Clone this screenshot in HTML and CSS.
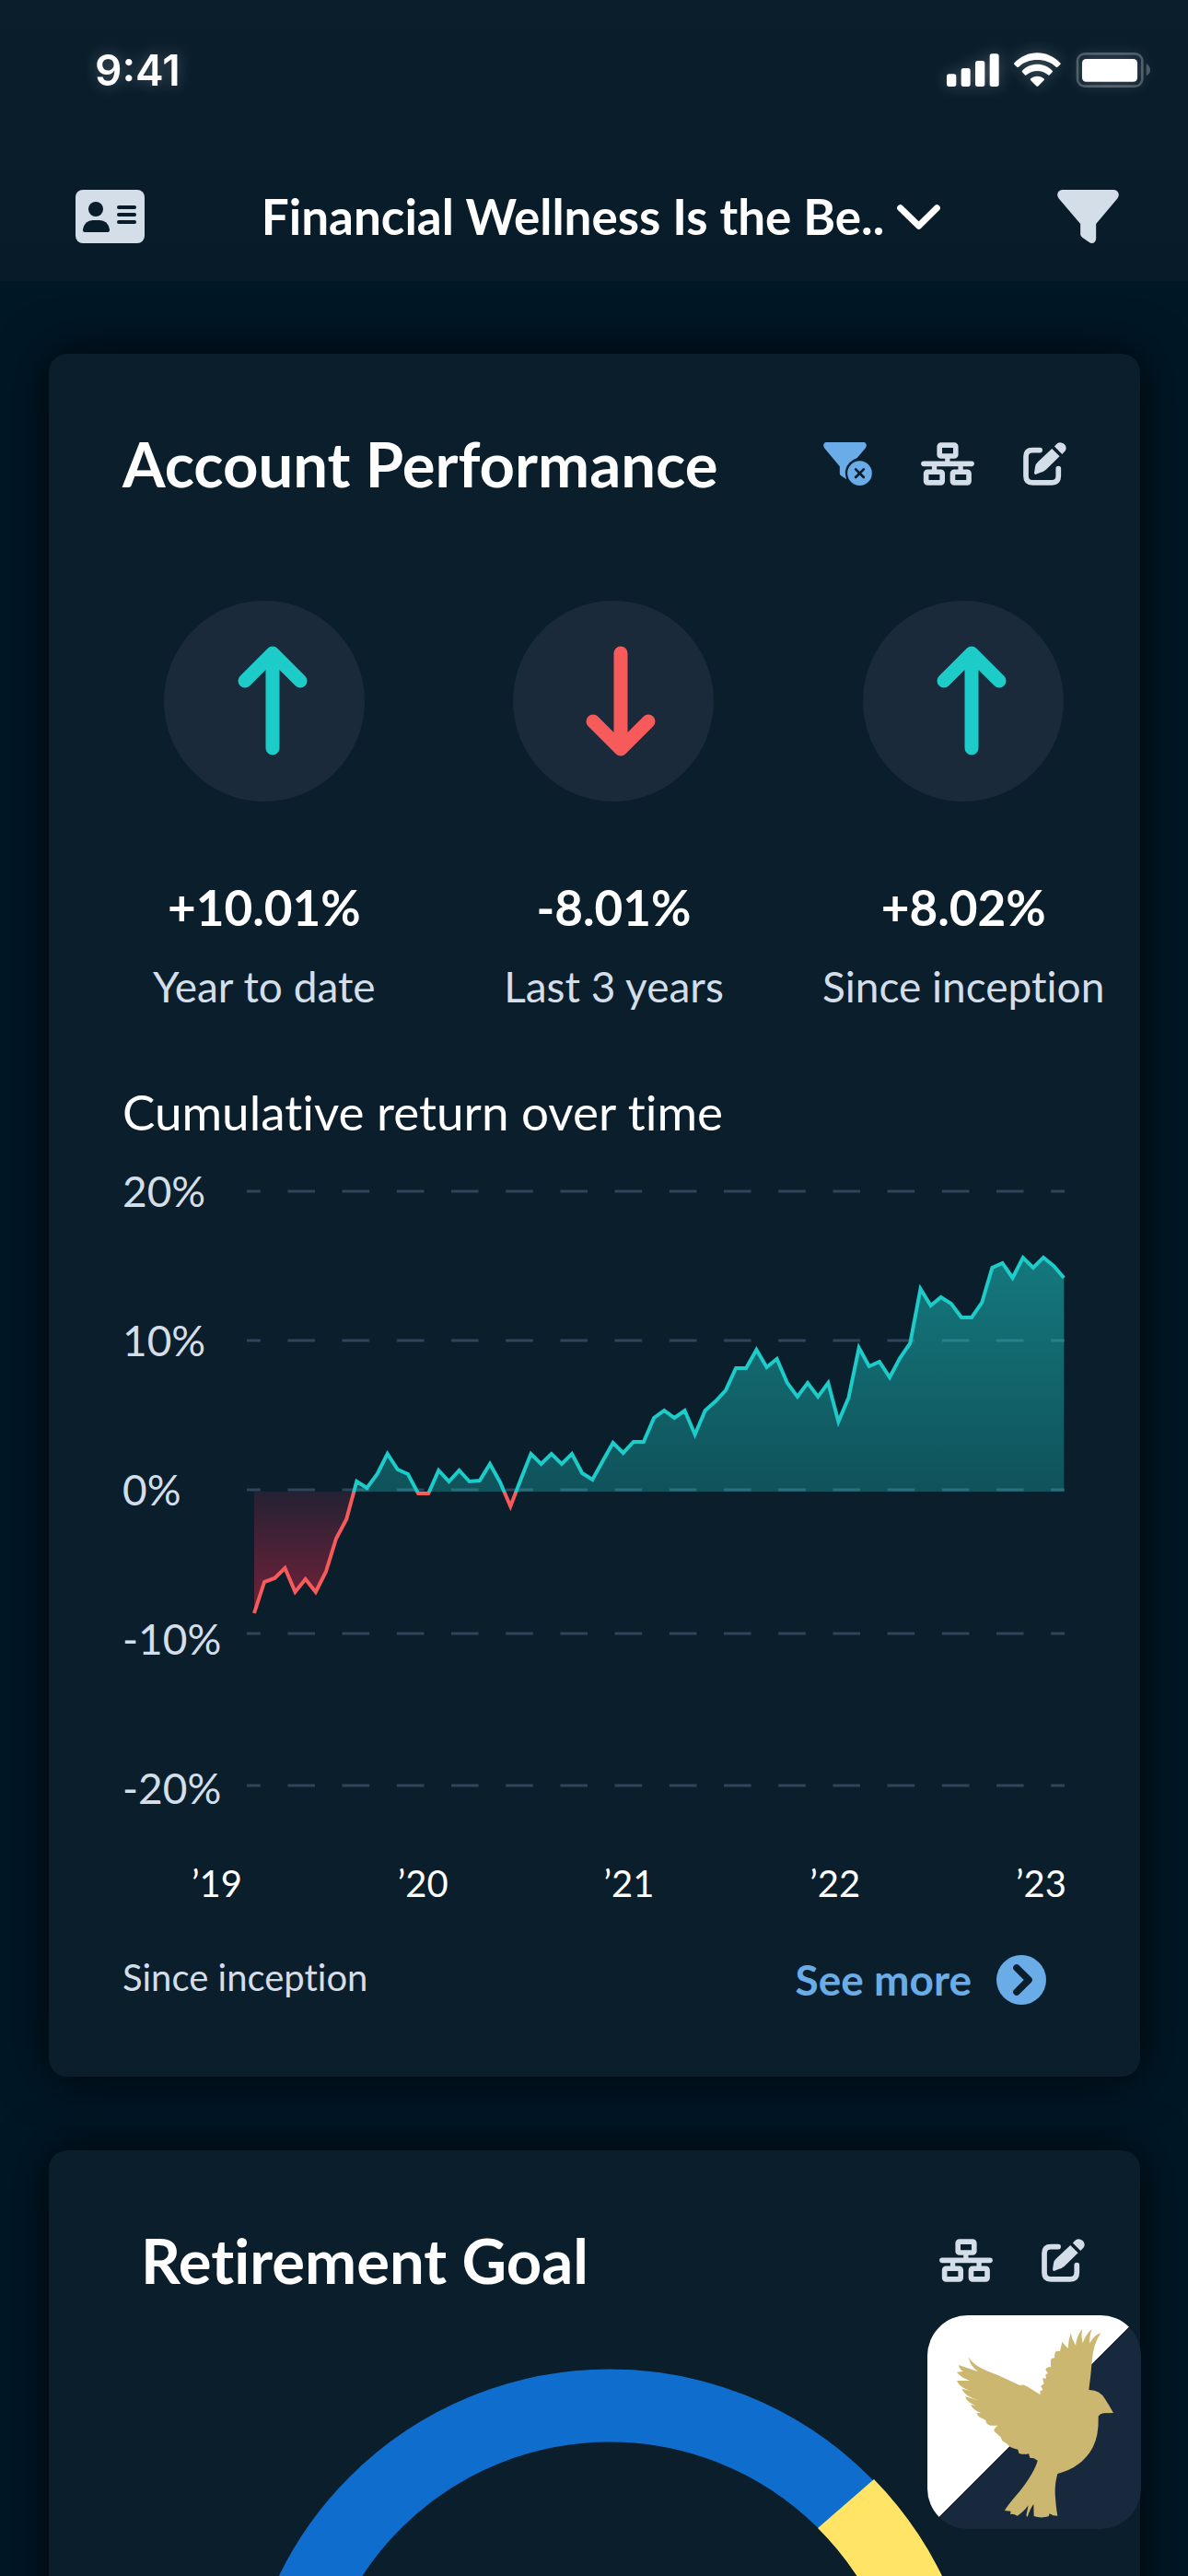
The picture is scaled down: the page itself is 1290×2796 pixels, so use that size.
FILE: index.html
```html
<!DOCTYPE html>
<html lang="en">
<head>
<meta charset="utf-8">
<meta name="viewport" content="width=device-width, initial-scale=1">
<title>Account Performance</title>
<link rel="stylesheet" href="styles.css">
</head>
<body>
<svg class="sprite" aria-hidden="true">
  <symbol id="icon-network" viewBox="482 117 175 141">
    <g fill="none" stroke="currentColor" stroke-width="17">
      <rect x="543" y="126" width="53" height="36" rx="5"/>
      <rect x="499" y="214" width="53" height="35" rx="5"/>
      <rect x="586" y="214" width="53" height="35" rx="5"/>
      <path d="M491 187H648" stroke-linecap="round"/>
      <path d="M569 165V187M526 187V210M612 187V210" stroke-width="16"/>
    </g>
  </symbol>
  <symbol id="icon-edit" viewBox="814 119 140 139">
    <path d="M868 144H844Q823 144 823 165V228Q823 249 844 249H907Q928 249 928 228V204" fill="none" stroke="currentColor" stroke-width="17" stroke-linecap="round"/>
    <path d="M907 139L932 164L888 207Q880 214 869 217L856 222Q849 224 850 216L853 197Q855 188 862 182ZM915 132Q925 119 934 119Q952 121 953 138Q953 146 940 157Z" fill="currentColor"/>
  </symbol>
</svg>

<div class="app">
  <header class="topbar">
    <div class="status">
      <span class="time">9:41</span>
      <svg class="status-icons" viewBox="205 51 663 114" fill="#fff" aria-hidden="true">
        <rect x="205" y="121" width="31" height="41" rx="8"/>
        <rect x="252" y="102" width="30" height="60" rx="8"/>
        <rect x="298" y="78" width="31" height="84" rx="8"/>
        <rect x="345" y="55" width="30" height="107" rx="8"/>
        <path d="M424 86C466 40 534 40 576 86Q577 88 575 90L565 99Q563 100 561 98C530 67 470 67 439 98Q437 100 435 99L425 90Z"/>
        <path d="M450 111C478 82 522 82 550 111Q551 113 549 115L539 125Q537 126 535 124C515 107 485 107 465 124Q463 126 461 125L451 115Z"/>
        <path d="M477 137C490 125 510 125 523 137Q524 139 522 141L502 161Q500 162 498 161L478 141Z"/>
        <rect x="631" y="55" width="211" height="106" rx="24" fill="none" stroke="#fff" stroke-opacity=".25" stroke-width="8"/>
        <path d="M855 88Q868 95 868 108Q868 120 855 127Z" fill-opacity=".25"/>
        <rect x="646" y="72" width="180" height="74" rx="13"/>
      </svg>
    </div>
    <nav class="nav">
      <button class="icon-button" type="button" aria-label="Contact card">
        <svg class="icon-card" viewBox="0 0 75 58" aria-hidden="true">
          <rect width="75" height="58" rx="8" fill="#d4dee9"/>
          <g fill="#091c2a">
            <circle cx="22" cy="21" r="8"/>
            <path d="M8 43V44Q8 46 10 46H35Q37 46 37 44V43Q35 33 26 33H19Q10 33 8 43Z"/>
            <rect x="45" y="17" width="21" height="4" rx="2"/>
            <rect x="45" y="25" width="21" height="4" rx="2"/>
            <rect x="45" y="33" width="21" height="4" rx="2"/>
          </g>
        </svg>
      </button>
      <button class="switcher" type="button">
        <span>Financial Wellness Is the Be..</span>
        <svg class="icon-chevron" viewBox="39 555 141 81" fill="none" stroke="#fff" stroke-width="21" stroke-linecap="round" stroke-linejoin="round" aria-hidden="true"><path d="M50 566L110 625L169 566"/></svg>
      </button>
      <button class="icon-button" type="button" aria-label="Filter">
        <svg class="icon-filter" viewBox="564 498 200 174" aria-hidden="true"><path d="M580 498H748Q762 499 764 514Q764 520 760 526L690 609V658Q688 672 676 672Q672 672 668 669L645 653Q639 649 639 643V609L568 526Q564 520 564 514Q566 499 580 498Z" fill="#d4dee9"/></svg>
      </button>
    </nav>
  </header>

  <main class="content">
    <section class="card">
      <div class="card-head">
        <h2>Account Performance</h2>
        <div class="actions">
          <button class="icon-button active" type="button" aria-label="Clear filter">
            <svg class="icon-clear" viewBox="163 117 158 141" aria-hidden="true">
              <path d="M172 117H294Q302 118 303 127Q303 132 299 137L272 169Q240 180 234 212Q234 227 238 238L220 226Q216 223 216 218V196L167 137Q163 132 163 127Q164 118 172 117Z" fill="currentColor"/>
              <circle cx="281" cy="218" r="40" fill="currentColor"/>
              <path d="M268 205L294 231M294 205L268 231" stroke="#0a1e2c" stroke-width="8" stroke-linecap="round"/>
            </svg>
          </button>
          <button class="icon-button" type="button" aria-label="Accounts structure"><svg class="icon-network"><use href="#icon-network"/></svg></button>
          <button class="icon-button" type="button" aria-label="Edit"><svg class="icon-edit"><use href="#icon-edit"/></svg></button>
        </div>
      </div>

      <div class="metrics">
        <div class="metric up">
          <svg class="arrow" viewBox="0 0 218 218" aria-hidden="true"><circle cx="109" cy="109" r="109"/><path d="M118 160V58M88 87L118 57L148 87"/></svg>
          <strong>+10.01%</strong>
          <span>Year to date</span>
        </div>
        <div class="metric down">
          <svg class="arrow" viewBox="0 0 218 218" aria-hidden="true"><circle cx="109" cy="109" r="109"/><path d="M117 57V159M87 131L117 161L147 131"/></svg>
          <strong>-8.01%</strong>
          <span>Last 3 years</span>
        </div>
        <div class="metric up">
          <svg class="arrow" viewBox="0 0 218 218" aria-hidden="true"><circle cx="109" cy="109" r="109"/><path d="M118 160V58M88 87L118 57L148 87"/></svg>
          <strong>+8.02%</strong>
          <span>Since inception</span>
        </div>
      </div>

      <h3>Cumulative return over time</h3>
      <div class="chart">
        <div class="y-axis"><span>20%</span><span>10%</span><span>0%</span><span>-10%</span><span>-20%</span></div>
        <svg class="plot" viewBox="0 -2 888 702" preserveAspectRatio="none" role="img" aria-label="Cumulative return, 2019 to 2023">
          <defs>
            <linearGradient id="gain" x1="0" y1="96" x2="0" y2="351" gradientUnits="userSpaceOnUse"><stop offset="0" stop-color="#1dccc8" stop-opacity=".52"/><stop offset="1" stop-color="#1dccc8" stop-opacity=".3"/></linearGradient>
            <linearGradient id="loss" x1="0" y1="351" x2="0" y2="483" gradientUnits="userSpaceOnUse"><stop offset="0" stop-color="#252134"/><stop offset="1" stop-color="#742239"/></linearGradient>
            <clipPath id="above"><rect width="892" height="352"/></clipPath>
            <clipPath id="below"><rect y="352" width="888" height="350"/></clipPath>
            <clipPath id="gain-area"><rect width="888" height="351"/></clipPath>
            <path id="line" d="M8 483 19.1 449 30.3 445 41.4 434 52.5 460 63.7 446 74.8 460 85.9 438 97 402 108.2 381 119.3 340 130.4 347 141.6 332 152.7 310 163.8 327 175 332 186.1 353 197.2 353 208.3 328 219.5 340 230.6 328 241.7 340 252.9 339 264 321 275.1 341 286.3 367 297.4 338 308.5 310 319.6 321 330.8 310 341.9 321 353 310 364.2 331 375.3 338 386.4 318 397.6 298 408.7 309 419.8 297 430.9 297 442.1 271 453.2 263 464.3 271 475.5 263 486.6 289 497.7 263 508.9 253 520 241 531.1 217 542.2 217 553.4 197 564.5 216 575.6 207 586.8 233 597.9 248 609 233 620.2 248 631.3 233 642.4 275 653.5 249 664.7 195 675.8 215 686.9 210 698.1 227 709.2 206 720.3 190 731.5 131 742.6 149 753.7 140 764.8 147 776 162 787.1 162 798.2 146 809.4 108 820.5 103 831.6 119 842.8 97 853.9 108 865 97 876.1 106 887.3 119"/>
          </defs>
          <g class="grid"><path d="M0 25H888"/><path d="M0 187H888"/><path d="M0 349H888"/><path d="M0 505H888"/><path d="M0 670H888"/></g>
          <path fill="url(#gain)" clip-path="url(#gain-area)" d="M119.3 351V340L130.4 347 141.6 332 152.7 310 163.8 327 175 332 186.1 353 197.2 353 208.3 328 219.5 340 230.6 328 241.7 340 252.9 339 264 321 275.1 341 286.3 367 297.4 338 308.5 310 319.6 321 330.8 310 341.9 321 353 310 364.2 331 375.3 338 386.4 318 397.6 298 408.7 309 419.8 297 430.9 297 442.1 271 453.2 263 464.3 271 475.5 263 486.6 289 497.7 263 508.9 253 520 241 531.1 217 542.2 217 553.4 197 564.5 216 575.6 207 586.8 233 597.9 248 609 233 620.2 248 631.3 233 642.4 275 653.5 249 664.7 195 675.8 215 686.9 210 698.1 227 709.2 206 720.3 190 731.5 131 742.6 149 753.7 140 764.8 147 776 162 787.1 162 798.2 146 809.4 108 820.5 103 831.6 119 842.8 97 853.9 108 865 97 876.1 106 887.3 119V351Z"/>
          <path fill="url(#loss)" d="M8 351V483L19.1 449 30.3 445 41.4 434 52.5 460 63.7 446 74.8 460 85.9 438 97 402 108.2 381 116.5 351Z"/>
          <use href="#line" class="gain-line" clip-path="url(#above)"/>
          <use href="#line" class="loss-line" clip-path="url(#below)"/>
        </svg>
      </div>
      <div class="x-axis"><span>’19</span><span>’20</span><span>’21</span><span>’22</span><span>’23</span></div>
      <div class="card-foot">
        <span>Since inception</span>
        <a href="#performance">See more
          <svg class="icon-more" viewBox="727 65 160 160" aria-hidden="true"><circle cx="807" cy="145" r="80" fill="currentColor"/><path d="M792 106L831 145L792 184" fill="none" stroke="#0a1e2c" stroke-width="22" stroke-linecap="round" stroke-linejoin="round"/></svg>
        </a>
      </div>
    </section>

    <section class="card goal">
      <div class="card-head">
        <h2>Retirement Goal</h2>
        <div class="actions">
          <button class="icon-button" type="button" aria-label="Accounts structure"><svg class="icon-network"><use href="#icon-network"/></svg></button>
          <button class="icon-button" type="button" aria-label="Edit"><svg class="icon-edit"><use href="#icon-edit"/></svg></button>
        </div>
      </div>
      <svg class="donut" viewBox="0 0 800 800" role="img" aria-label="Retirement goal progress">
        <circle cx="400" cy="400" r="360" fill="none" stroke="#0f6ecd" stroke-width="79"/>
        <path d="M687 120A400 400 0 0 1 687 680L627 627A321 321 0 0 0 626 173Z" fill="#ffe465"/>
      </svg>
    </section>
  </main>

  <button class="assistant" type="button" aria-label="Open assistant">
    <svg viewBox="141 399 696 696" aria-hidden="true"><path fill="#ccb770" d="M275 535C296 572 345 582 384 600L442 627Q453 622 466 631L509 658L508 646L517 642L511 629L521 622L516 604L528 605L526 591L534 589L526 576Q528 566 543 568L543 544Q547 537 556 538Q553 520 563 515L573 516L580 486L599 507Q600 480 608 457Q612 480 624 497Q628 465 645 444Q641 468 647 490Q656 462 677 444Q668 468 670 490Q684 464 706 457Q682 490 677 550Q673 600 667 642Q702 641 720 672Q732 690 747 717L714 718Q702 720 698 728Q700 790 680 829Q645 895 565 915Q556 945 557 980Q560 1025 565 1052L551 1051L539 1045L536 1054Q510 1061 488 1053L487 1014Q475 1030 467 1056L463 1051L470 1018Q452 1042 434 1052Q422 1045 411 1047L413 1037L393 1035Q400 1020 442 972Q490 910 500 872L488 865L475 863L471 850Q455 854 439 848L436 836Q425 835 411 828Q398 814 385 808L380 796L358 776Q358 765 371 758L347 758Q332 755 331 740Q305 732 301 718L315 717Q290 708 282 690L298 693Q269 682 264 663L308 677Q259 660 253 638L284 646Q247 636 237 612L279 612Q248 600 237 584L258 582Q245 575 243 561L307 583Q280 565 275 535Z"/></svg>
  </button>
</div>
</body>
</html>
```

FILE: styles.css
```css
* { box-sizing: border-box; }

body {
  margin: 0;
  background: #001726;
  color: #fff;
  font-family: Lato, "Liberation Sans", sans-serif;
  font-variant-ligatures: none;
}

button {
  padding: 0;
  border: 0;
  background: none;
  color: inherit;
  font: inherit;
  cursor: pointer;
}

svg { display: block; flex: none; }

.sprite { position: absolute; width: 0; height: 0; }

.app {
  display: flex;
  flex-direction: column;
  height: 100vh;
}

/* Status bar and navigation */
.topbar {
  flex: none;
  padding: 57px 0 38px;
  background: linear-gradient(#0a1e2c, #081b29);
}

.status {
  display: flex;
  justify-content: space-between;
  align-items: center;
  padding: 0 41px 0 103px;
  filter: drop-shadow(0 0 8px rgba(255, 255, 255, 0.25));
}

.time {
  font: 600 46px/38px Inter, sans-serif;
}

.status-icons { width: 221px; height: 38px; }

.nav {
  display: flex;
  justify-content: space-between;
  align-items: center;
  margin-top: 108px;
  padding: 0 75px 0 82px;
}

.icon-button { color: #d4dee9; }
.icon-button.active { color: #69ace8; }

.switcher {
  display: flex;
  align-items: center;
  gap: 14px;
  font-size: 53px;
  font-weight: 700;
  line-height: 64px;
}

.icon-card { width: 75px; height: 58px; }
.icon-filter { width: 67px; height: 58px; }
.icon-chevron { width: 47px; height: 27px; }
.icon-clear { width: 53px; height: 47px; }
.icon-network { width: 58px; height: 47px; }
.icon-edit { width: 47px; height: 47px; }
.icon-more { width: 54px; height: 54px; }

/* Scrolling list of cards */
.content {
  flex: 1;
  min-height: 0;
  padding: 79px 52px 80px 53px;
  overflow: hidden auto;
  scrollbar-width: none;
}

.card {
  padding: 79px 80px 78px;
  border-radius: 20px;
  background: #0a1e2c;
  box-shadow: 0 0 54px rgba(0, 0, 0, 0.8);
}

.card + .card { margin-top: 80px; }

.card-head {
  display: flex;
  justify-content: space-between;
  align-items: center;
}

h2 {
  margin: 0;
  font-size: 67px;
  font-weight: 700;
  line-height: 80px;
}

.actions { display: flex; gap: 53px; }

/* Headline figures */
.metrics {
  display: grid;
  grid-template-columns: repeat(3, 1fr);
  margin: 109px -78px 0 -36px;
}

.metric {
  display: flex;
  flex-direction: column;
  align-items: center;
}

.metric strong {
  margin: 83px 0 26px;
  font-size: 53px;
  font-weight: 700;
  line-height: 64px;
}

.metric span {
  color: #d4dee9;
  font-size: 46px;
  line-height: 56px;
}

.arrow { width: 218px; height: 218px; }
.arrow circle { fill: #1a2a3b; }

.arrow path {
  fill: none;
  stroke: currentColor;
  stroke-width: 15px;
  stroke-linecap: round;
  stroke-linejoin: round;
}

.up .arrow { color: #1dccc8; }
.down .arrow { color: #f75a5a; }

/* Chart */
h3 {
  margin: 76px 0 27px;
  font-size: 53px;
  font-weight: 400;
  line-height: 64px;
}

.chart { display: flex; padding-right: 2px; }

.y-axis {
  display: flex;
  flex: none;
  flex-direction: column;
  gap: 108px;
  width: 135px;
  color: #d4dee9;
  font-size: 46px;
  line-height: 54px;
}

.plot {
  flex: 1;
  min-width: 0;
  height: 702px;
  overflow: visible;
}

.grid path {
  stroke: #30455b;
  stroke-width: 3px;
  stroke-dasharray: 29.6 29.6;
  stroke-dashoffset: 14.8;
}

.gain-line, .loss-line { fill: none; stroke-width: 4px; }
.gain-line { stroke: #1dccc8; }
.loss-line { stroke: #f75a5a; }

.x-axis {
  display: flex;
  justify-content: space-between;
  margin-top: 52px;
  padding-left: 75px;
  font-size: 40px;
  line-height: 48px;
}

.card-foot {
  display: flex;
  justify-content: space-between;
  align-items: flex-start;
  margin-top: 54px;
  padding-right: 22px;
}

.card-foot span {
  color: #d4dee9;
  font-size: 40px;
  line-height: 48px;
}

.card-foot a {
  display: flex;
  align-items: center;
  gap: 27px;
  color: #69ace8;
  font-size: 46px;
  font-weight: 700;
  line-height: 54px;
  text-decoration: none;
}

/* Retirement goal */
.goal { padding-right: 60px; padding-left: 100px; }

.donut {
  width: 800px;
  height: 800px;
  margin: 78px auto 0 109px;
}

/* Floating assistant launcher */
.assistant {
  position: fixed;
  right: 51px;
  bottom: 51px;
  width: 232px;
  height: 232px;
  border-radius: 44px;
  background: linear-gradient(135deg, #fff 50%, #18293d 50%);
}
```
